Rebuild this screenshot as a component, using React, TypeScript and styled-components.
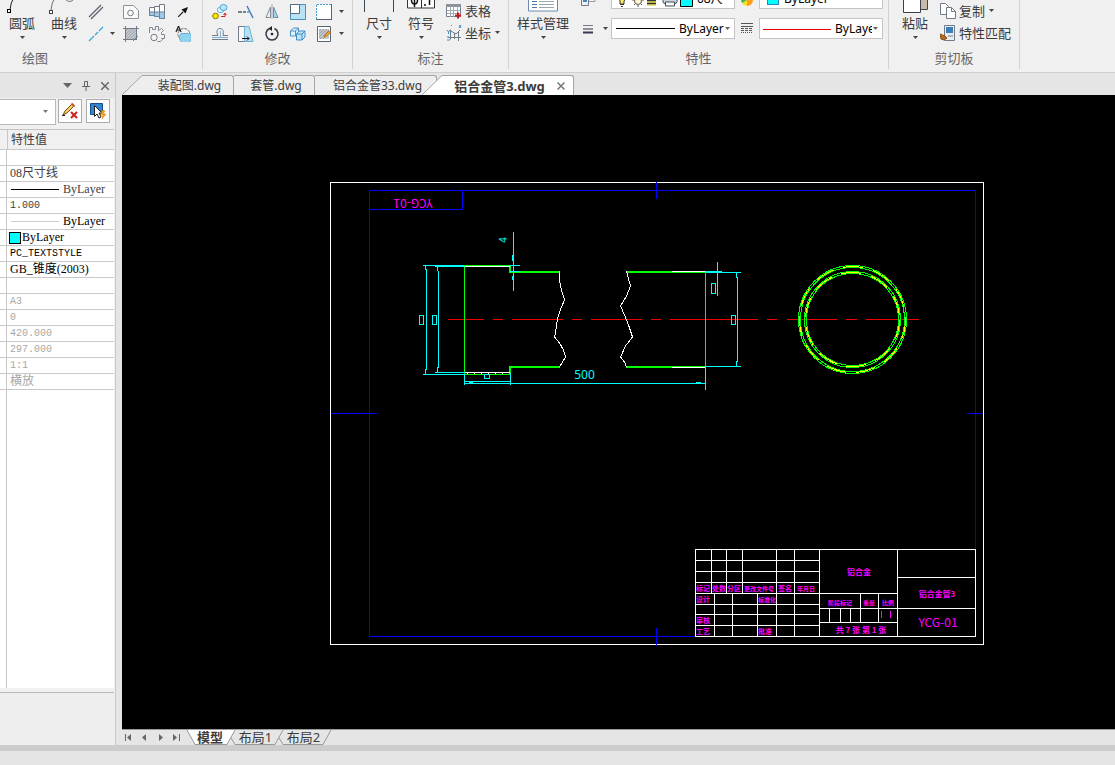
import React from 'react';
import styled, { createGlobalStyle, css } from 'styled-components';

const uiFont = '"Noto Sans", "Noto Sans CJK SC", sans-serif';

const GlobalStyle = createGlobalStyle`
  * { box-sizing: border-box; }
  body { margin: 0; background: #e5e5e5; font: 13px/18px ${uiFont}; color: #3c3c3c; }
  button, select, input { font: inherit; color: inherit; }
  button { border: 0; padding: 0; background: none; }
  svg { display: block; flex: none; }
`;

/* ---------- shell ---------- */

const Shell = styled.div`
  display: flex;
  flex-direction: column;
  min-height: 100vh;
`;

const Ribbon = styled.header`
  display: flex;
  height: 73px;
  overflow: hidden;
  background: #f0f0f0;
  border-bottom: 1px solid #d0d0d0;
`;

const Workspace = styled.div`
  display: flex;
  flex: 1;
`;

const StatusBar = styled.footer`
  height: 20px;
  border-top: 6px solid #cccccc;
  background: #e5e5e5;
`;

/* ---------- ribbon ---------- */

const Group = styled.section<{ $w: number }>`
  display: flex;
  flex-direction: column;
  flex: none;
  width: ${p => p.$w}px;
  height: 69px;
  border-right: 1px solid #d2d2d2;
`;

const GroupBody = styled.div<{ $pad: number }>`
  display: flex;
  height: 49px;
  padding-left: ${p => p.$pad}px;
`;

const GroupLabel = styled.div<{ $start?: boolean }>`
  color: #666;
  text-align: ${p => (p.$start ? 'left' : 'center')};
  padding-left: ${p => (p.$start ? 22 : 0)}px;
`;

const BigButton = styled.button<{ $w?: number }>`
  display: flex;
  flex-direction: column;
  align-items: center;
  flex: none;
  width: ${p => p.$w ?? 42}px;
`;

const BigText = styled.span`
  height: 22px;
  line-height: 18px;
  white-space: nowrap;
`;

const IconGrid = styled.div<{ $cols: string }>`
  display: grid;
  grid-template-columns: ${p => p.$cols};
  grid-auto-rows: 22px;
  padding-top: 1px;
`;

const IconButton = styled.button`
  display: flex;
  align-items: center;
  justify-content: center;
`;

const TextRows = styled.div`
  display: flex;
  flex-direction: column;
  padding-left: 4px;
`;

const TextButton = styled.button`
  display: flex;
  align-items: center;
  gap: 3px;
  height: 22px;
  white-space: nowrap;
`;

const PropertyGrid = styled.div`
  display: grid;
  grid-template-columns: 22px 12px 124px 24px 124px;
  grid-auto-rows: 21px;
  row-gap: 9px;
  margin-top: -12px;
`;

const Combo = styled.div`
  display: flex;
  align-items: center;
  border: 1px solid #c4c4c4;
  background: #fff;
  padding: 0 3px;
  font-size: 12px;
  color: #000;
`;

const ComboSelect = styled.select`
  appearance: none;
  flex: 1;
  min-width: 0;
  border: 0;
  padding: 0 0 0 4px;
  background: transparent;
  overflow: hidden;
`;

const Caret = ({ color = '#444' }: { color?: string }) => (
  <svg width="7" height="4" viewBox="0 0 7 4"><path d="M1 0h5L3.500 3z" fill={color} /></svg>
);

type IconProps = { children: React.ReactNode; w?: number; h?: number };
const Icon = ({ children, w = 16, h = 16 }: IconProps) => (
  <svg width={w} height={h} viewBox={`0 0 ${w} ${h}`} fill="none" stroke="#717b88" strokeWidth="1">
    {children}
  </svg>
);

const Hatch = () => (
  <>
    <rect x="2.5" y="2.5" width="11" height="11" fill="#c3c7cb" />
    <path d="M3 5l2-2M3 8l5-5M3 11l8-8M4 13l9-9M7 13l6-6M10 13l3-3" stroke="#969ca4" strokeWidth=".8" />
  </>
);

const drawTools: [string, React.ReactNode][] = [
  ['双线', <Icon><path d="M1 13L13 1M3 15L15 3" stroke="#5a626d" strokeWidth="1.300" /></Icon>],
  ['', <span />],
  ['孔', <Icon><path d="M.5 1.500h10l5 5v8H.5z" fill="#fafafa" stroke="#8b929b" /><circle cx="7.500" cy="9" r="2.800" /></Icon>],
  ['轴', <Icon><path d="M.5 3.500h5v8h-5z" fill="#fafafa" /><path d="M.5 8h5v3.500h-5z" fill="#a9c6e0" stroke="#6287a8" /><path d="M5.500 2.500h5v10h-5z" fill="#fafafa" /><path d="M5.500 8h5v4.500h-5z" fill="#a9c6e0" stroke="#6287a8" /><path d="M10.500 .5h5v14h-5z" fill="#fafafa" /><path d="M10.500 8h5v6.500h-5z" fill="#a9c6e0" stroke="#6287a8" /></Icon>],
  ['箭头', <Icon w={10} h={10}><path d="M0 10l5-5" stroke="#222" strokeWidth="1.200" /><path d="M10 0L7.500 6.500 3.500 2.500z" fill="#111" stroke="none" /></Icon>],
  ['构造线', <Icon><path d="M1 15L6 10M7 9l3-3M11 5l4-4" stroke="#35a7dc" strokeWidth="1.300" /></Icon>],
  ['更多线', <Caret />],
  ['填充', <Icon><Hatch /><path d="M2.500 0v16M13.500 0v12M0 2.500h16M0 13.500h12M10 15l5-5" /></Icon>],
  ['齿轮', <Icon><path d="M.5 7V1.500h3v2h3v-3h3v4l3-2 2 2-2 2v2h3v4h-3l1 1-2 2h-3" stroke="#7f8791" /><circle cx="5" cy="11.500" r="3.200" fill="#f4f4f4" /></Icon>],
  ['局部放大', <Icon><circle cx="9" cy="8.500" r="6" stroke="#6c7480" strokeDasharray="3 1" /><path d="M6 7.500h9a6 6 0 1 1-9 0z" fill="#8fd3ee" stroke="#6aaed0" /><path d="M1 6L3.500 0 6 6M2 4h3" stroke="#222" strokeWidth="1.200" /></Icon>],
];

const editTools: [string, React.ReactNode][] = [
  ['复制对象', <Icon><circle cx="3.500" cy="12" r="2.800" fill="#ffe600" stroke="#8c7a00" /><rect x="5.500" y="3.500" width="6" height="5" rx="2" fill="#e3f4fc" stroke="#56aee0" /><ellipse cx="11.500" cy="3.500" rx="3.500" ry="3" fill="#bfe5f8" stroke="#4ba3d8" /><path d="M9 12.500h4v-3M11.500 11l1.500-2 1.500 2" stroke="#c22" /></Icon>],
  ['延伸', <Icon><path d="M0 8h4M5 8h3" stroke="#4f5965" strokeWidth="1.500" /><path d="M9 8h2" stroke="#3ba4e0" strokeWidth="1.500" /><path d="M9 2l6 12" stroke="#3c77bd" strokeWidth="1.400" /></Icon>],
  ['镜像', <Icon w={14}><path d="M5.500 3v10.500H1z" fill="#eee" stroke="#838b95" /><path d="M8.500 3v10.500H13z" fill="#a9d4ea" stroke="#5c93b5" /><path d="M7 0v15" stroke="#aab" /></Icon>],
  ['缩放', <Icon><path d="M.5 .5h15v15H.5z" fill="#b9e2f5" stroke="#4b8fbf" /><path d="M.5 .5h9v9h-9z" fill="#fff" stroke="#5a6a7a" /></Icon>],
  ['选择', <Icon><rect x=".5" y=".5" width="15" height="15" fill="#fff" stroke="#58646f" /><path d="M.5 15V.5H15" stroke="#fff" /><path d="M.5 15V.5H15" stroke="#45a2d8" strokeDasharray="2 1" /></Icon>],
  ['更多选择', <Caret />],
  ['偏移', <Icon><path d="M0 9.500h6c-2-4-1-7 2-7s4 3 3 7h5M0 13.500h16" /><path d="M0 11.500h8.500V5M8.500 11.500H16" stroke="#7eb2d8" /></Icon>],
  ['拉伸', <Icon><path d="M.5 .5h9v15h-9z" fill="#f8f8f8" /><path d="M6.500 .5H11l4 15H6.500z" fill="#b9dff4" stroke="#6eb0d6" /><path d="M4 12.500h7M9 10.500l2 2-2 2" stroke="#111" /></Icon>],
  ['旋转', <Icon><path d="M10.500 2.500a6 6 0 1 1-5 0" stroke="#333b45" strokeWidth="1.500" /><path d="M8 0v5L4.500 2.500z" fill="#222" stroke="none" /><circle cx="8" cy="8" r="1.300" fill="#222" stroke="none" /></Icon>],
  ['阵列', <Icon><path d="M.5 5l3-3h5v5l-3 3h-5zM.5 5h5v5M5.500 5l3-3" fill="#dff1fa" stroke="#4b91c2" /><path d="M6.500 8l2.500-3h6v6l-3 3H6.500zM6.500 8H12v6M12 8l3-3" fill="#bde5f8" stroke="#4290c5" /></Icon>],
  ['填充编辑', <Icon><path d="M1.500 .5h13v15h-13z" fill="#fff" stroke="#5c6671" /><rect x="3" y="3" width="10" height="10" fill="#c6c9cc" stroke="none" /><path d="M3 5l2-2M3 8l5-5M3 11l8-8M4 13l9-9M7 13l6-6" stroke="#959ba2" /><path d="M9 9l4-4 2 1-4 4-3 1z" fill="#f5a326" stroke="#a76412" strokeWidth=".7" /></Icon>],
  ['更多编辑', <Caret />],
];

function ToolGrid({ cols, tools }: { cols: string; tools: [string, React.ReactNode][] }) {
  return (
    <IconGrid $cols={cols}>
      {tools.map(([name, icon], i) =>
        name ? <IconButton key={i} aria-label={name}>{icon}</IconButton> : <span key={i} />,
      )}
    </IconGrid>
  );
}

function Big({ icon, text, w }: { icon: React.ReactNode; text: string; w?: number }) {
  return (
    <BigButton $w={w}>
      <svg width="34" height="14" viewBox="0 0 34 14" fill="none" stroke="#3d4654">{icon}</svg>
      <BigText>{text}</BigText>
      <Caret />
    </BigButton>
  );
}

const LineWeightIcon = () => (
  <Icon w={12} h={10}><path d="M1 1.500h10" /><path d="M1 5h10" stroke="#333" /><path d="M1 8.500h10" stroke="#333b55" strokeWidth="2" /></Icon>
);

function RibbonBar() {
  return (
    <Ribbon>
      <Group $w={203}>
        <GroupBody $pad={1}>
          <Big text="圆弧" icon={<><path d="M5 10Q5 3 10 -4" stroke="#222" /><rect x="2.500" y="9.500" width="3" height="3" fill="#fff" stroke="#000" /></>} />
          <Big text="曲线" icon={<><path d="M4 10Q4 3 9 -4M18 -1q5 5 9 0" stroke="#6b7280" /><rect x="2.500" y="10.500" width="3" height="3" fill="#fff" stroke="#444" /></>} />
          <ToolGrid cols="22px 11px 26px 26px 26px" tools={drawTools} />
        </GroupBody>
        <GroupLabel $start>绘图</GroupLabel>
      </Group>

      <Group $w={150}>
        <GroupBody $pad={4}>
          <ToolGrid cols="26px 26px 26px 26px 26px 8px" tools={editTools} />
        </GroupBody>
        <GroupLabel>修改</GroupLabel>
      </Group>

      <Group $w={156}>
        <GroupBody $pad={5}>
          <Big text="尺寸" icon={<path d="M2.500 0v12M31.500 0v12" />} />
          <Big text="符号" icon={<><path d="M3.500 -4h27v12h-27zM17.500 0v8" fill="#fff" stroke="#333" /><path d="M10.500 0v7M7.500 0q0 4 3 4t3-4M21 6v-2M25.500 5V0" stroke="#111" strokeWidth="1.500" /></>} />
          <TextRows>
            <TextButton>
              <Icon>
                <path d="M.5 1.500h14v12H.5z" fill="#fff" /><path d="M0 2.500h15" stroke="#8a929c" strokeWidth="3" />
                <path d="M.5 7.500h14M.5 10.500h14M4.500 3v11M7.500 3v11M11.500 3v11" stroke="#a3a9b0" /><path d="M12 9.500v6M9 12.500h6" stroke="#c5161d" strokeWidth="2" />
              </Icon>
              表格
            </TextButton>
            <TextButton>
              <Icon>
                <path d="M4.500 4.500v10M2 12.500h13M5 6l5 3 4-4M12.500 6v10M8.500 8v6" /><path d="M1 5l1.500 2L4 5M2.500 7v2M5 0l1 1M13 0l2 3M15 0l-2 3M1 12h2M1 15h3" stroke="#3b8fd0" />
              </Icon>
              坐标
              <Caret />
            </TextButton>
          </TextRows>
        </GroupBody>
        <GroupLabel>标注</GroupLabel>
      </Group>

      <Group $w={380}>
        <GroupBody $pad={0}>
          <Big w={68} text="样式管理" icon={<><path d="M2.500 -4h29v15h-29z" fill="#fff" stroke="#6b8dad" /><path d="M6 1.500h5M6 4.500h5M6 7.500h5" stroke="#4f7da8" /><path d="M13 1.500h15M13 4.500h15M13 7.500h15" stroke="#9aa6b2" /></>} />
          <PropertyGrid>
            <IconButton aria-label="图层"><Icon><path d="M1.500 1.500h7v13h-7z" /><path d="M3 6h4v5H3z" fill="#4b82bd" stroke="none" /><path d="M9 5.500h6v5H9" stroke="#99a" /></Icon></IconButton>
            <span />
            <Combo>
              <svg width="78" height="19" viewBox="0 0 78 19">
                <path d="M3 5a4 4 0 0 1 6 7v3H5v-3z" fill="#ffe96b" stroke="#333" /><path d="M5 15.500h4M6 17.500h2" stroke="#333" />
                <circle cx="23" cy="12" r="3.500" fill="#fff6d0" stroke="#555" /><path d="M17 11h2M27 11h2M19 16l1-1M27 16l-1-1M23 16v2" stroke="#555" />
                <path d="M32 11.500h9M32 14.500h9" stroke="#333" strokeWidth="2" /><path d="M32 13h9M32 16h9" stroke="#d8d000" />
                <rect x="48" y="8.500" width="14" height="6" rx="2" fill="#ccd4dd" stroke="#444b55" /><path d="M50.500 13h9v4h-9z" fill="#fff" stroke="#444b55" />
                <path d="M65.500 4.500h12v13h-12z" fill="#00ffff" stroke="#000" />
              </svg>
              <ComboSelect aria-label="当前图层"><option>08尺寸线</option></ComboSelect>
              <Caret color="#666" />
            </Combo>
            <IconButton aria-label="颜色">
              <Icon w={14} h={16}><g stroke="none"><path d="M7 9V3a6 6 0 0 1 6 6z" fill="#e94b35" /><path d="M7 9h6a6 6 0 0 1-6 6z" fill="#ff9d18" /><path d="M7 9v6a6 6 0 0 1-5-3z" fill="#ffdf1b" /><path d="M7 9L2 12a6 6 0 0 1 5-9z" fill="#44b34a" /></g></Icon>
            </IconButton>
            <Combo>
              <svg width="17" height="19"><rect x="4.500" y="3.500" width="11" height="12" fill="#00ffff" stroke="#2685c9" /></svg>
              <ComboSelect aria-label="对象颜色"><option>ByLayer</option></ComboSelect>
              <Caret color="#666" />
            </Combo>
            <IconButton aria-label="线宽设置"><LineWeightIcon /></IconButton>
            <IconButton aria-label="更多线宽"><Caret /></IconButton>
            <Combo>
              <svg width="60" height="19"><path d="M1 9.500h59" stroke="#000" /></svg>
              <ComboSelect aria-label="线宽"><option>ByLayer</option></ComboSelect>
              <Caret color="#666" />
            </Combo>
            <IconButton aria-label="线型设置"><Icon w={12} h={11}><path d="M0 .5h12M0 3.500h12" stroke="#555" /><path d="M0 5.500h12M0 7.500h12" stroke="#555" strokeDasharray="3 1" /><path d="M0 9.500h12" stroke="#555" strokeDasharray="1 1" /></Icon></IconButton>
            <Combo>
              <svg width="68" height="19"><path d="M0 10.500h68" stroke="#f00000" /></svg>
              <ComboSelect aria-label="线型"><option>ByLayer</option></ComboSelect>
              <Caret color="#666" />
            </Combo>
          </PropertyGrid>
        </GroupBody>
        <GroupLabel>特性</GroupLabel>
      </Group>

      <Group $w={131}>
        <GroupBody $pad={5}>
          <Big text="粘贴" icon={<><path d="M22 -2h7.500v11.500H22z" fill="#c8bba8" stroke="#4a4440" /><path d="M5.500 -2h17v14.500h-17z" fill="#fff" stroke="#3b4150" /></>} />
          <TextRows>
            <TextButton>
              <Icon><path d="M.5 .5h5l3 3v8h-8z" fill="#fff" /><path d="M6.500 4.500h5l4 4v7h-9z" fill="#fff" /><path d="M11.500 4.500v4h4" /></Icon>
              复制
              <Caret />
            </TextButton>
            <TextButton>
              <Icon><path d="M4.500 .5h10v15h-10z" fill="#e9edf1" /><path d="M6 2h7v6H6z" fill="#3c7db8" stroke="none" /><path d="M8 11h5" /><path d="M0 9l5 2 2 2-3 2-3-1z" fill="#b56a1d" stroke="#8b5014" /></Icon>
              特性匹配
            </TextButton>
          </TextRows>
        </GroupBody>
        <GroupLabel>剪切板</GroupLabel>
      </Group>
    </Ribbon>
  );
}

/* ---------- property panel ---------- */

const Panel = styled.aside`
  display: flex;
  flex-direction: column;
  flex: none;
  width: 116px;
  background: #f0f0f0;
  border-right: 1px solid #c8c8c8;
`;

const PanelTitle = styled.div`
  display: flex;
  align-items: center;
  justify-content: flex-end;
  gap: 7px;
  height: 25px;
  padding-right: 4px;
  background: #e5e5e5;
`;

const PanelButton = styled.button`
  display: flex;
  align-items: center;
  justify-content: center;
  width: 12px;
  height: 12px;
`;

const PanelTools = styled.div`
  display: flex;
  align-items: flex-start;
  gap: 4px;
  height: 31px;
  padding-top: 1px;
`;

const ObjectCombo = styled.div`
  display: flex;
  align-items: center;
  width: 56px;
  height: 26px;
  padding-right: 6px;
  border: solid #b9b9b9;
  border-width: 1px 1px 1px 0;
  background: #fff;
  margin-right: -2px;
`;

const ToolBox = styled.button`
  display: flex;
  align-items: center;
  justify-content: center;
  width: 24px;
  height: 24px;
  border: 1px solid #adadad;
  background: #fdfdfd;
`;

const TableFrame = styled.div`
  flex: 1;
  margin-right: 1px;
  border-top: 1px solid #c4c4c4;
  background: linear-gradient(#c8c8c8, #c8c8c8) 6px 0 / 1px 100% no-repeat #fff;
`;

const PropTable = styled.table`
  width: 100%;
  border-collapse: separate;
  border-spacing: 0;
  table-layout: fixed;
  font: 12px/15px "Liberation Serif", "Noto Sans CJK SC", serif;
`;

const HeadCell = styled.th<{ $key?: boolean }>`
  width: ${p => (p.$key ? '7px' : 'auto')};
  height: 20px;
  padding: 1px 0 0 ${p => (p.$key ? 0 : 3)}px;
  border: solid #c8c8c8;
  border-width: 0 0 1px ${p => (p.$key ? 0 : 1)}px;
  background: #f0f0f0;
  font-weight: 400;
  text-align: left;
`;

const Cell = styled.td<{ $tone?: string }>`
  height: 16px;
  padding: 0 0 0 3px;
  border-bottom: 1px solid #c8c8c8;
  color: ${p => (p.$tone === 'dim' ? '#a8a8a8' : p.$tone === 'strong' ? '#000' : '#404040')};
  white-space: nowrap;
`;

const CellValue = styled.div<{ $mono?: boolean }>`
  display: flex;
  align-items: center;
  gap: 4px;
  height: 15px;
  ${p => p.$mono && css`font: 10px/15px "Liberation Mono", monospace;`}
`;

const Swatch = styled.span`
  width: 12px;
  height: 12px;
  margin: 0 -3px 0 -1px;
  border: 1px solid #000;
  background: #00ffff;
`;

const PanelHint = styled.div`
  height: 52px;
  margin: 4px 1px 1px 0;
  border-top: 1px solid #b9b9b9;
  background: #eeeeee;
`;

const rows: { tone?: string; mono?: boolean; value: React.ReactNode }[] = [
  { value: '' },
  { value: '08尺寸线' },
  { value: <><svg width="49" height="3"><path d="M1 1.500h48" stroke="#000" /></svg>ByLayer</> },
  { mono: true, value: '1.000' },
  { tone: 'strong', value: <><svg width="49" height="3"><path d="M1 1.500h48" stroke="#ccc" /></svg>ByLayer</> },
  { tone: 'strong', value: <><Swatch />ByLayer</> },
  { tone: 'strong', mono: true, value: 'PC_TEXTSTYLE' },
  { tone: 'strong', value: 'GB_锥度(2003)' },
  { value: '' },
  { tone: 'dim', mono: true, value: 'A3' },
  { tone: 'dim', mono: true, value: '0' },
  { tone: 'dim', mono: true, value: '420.000' },
  { tone: 'dim', mono: true, value: '297.000' },
  { tone: 'dim', mono: true, value: '1:1' },
  { tone: 'dim', value: '横放' },
];

function PropertyPanel() {
  return (
    <Panel>
      <PanelTitle>
        <PanelButton aria-label="菜单"><svg width="9" height="5"><path d="M0 0h9L4.500 5z" fill="#666" /></svg></PanelButton>
        <PanelButton aria-label="固定"><svg width="8" height="10" fill="none" stroke="#666"><path d="M2.500 5.500v-5h3v5M5.500 .5v5M0 5.500h8M4 6v4" /></svg></PanelButton>
        <PanelButton aria-label="关闭"><svg width="8" height="8" stroke="#666" strokeWidth="1.500"><path d="M0 0l8 8M8 0l-8 8" /></svg></PanelButton>
      </PanelTitle>
      <PanelTools>
        <ObjectCombo>
          <ComboSelect aria-label="对象类型"><option> </option></ComboSelect>
          <Caret color="#777" />
        </ObjectCombo>
        <ToolBox aria-label="清除选择">
          <svg width="18" height="18" viewBox="0 0 18 18"><path d="M2 13l2-4 7-7 2 2-7 7z" fill="#f6cf58" stroke="#6e4a20" /><path d="M10.500 1.500l3 3" stroke="#c7502a" strokeWidth="2" /><path d="M1 13.500h3" stroke="#222" /><path d="M10 10l6 6M16 10l-6 6" stroke="#d01d1d" strokeWidth="2" /></svg>
        </ToolBox>
        <ToolBox aria-label="快速选择">
          <svg width="18" height="18" viewBox="0 0 18 18"><path d="M1.500 1.500h12v11h-12z" fill="#3286d1" stroke="#164f8e" /><path d="M5.500 3.500v11l2.500-2.500 2 4 2-1-2-4h3z" fill="#fff" stroke="#222" /><path d="M14 8l-3 5h3l-1 4 4-5h-3l2-3z" fill="#f6a51f" stroke="#d07a00" strokeWidth=".5" /></svg>
        </ToolBox>
      </PanelTools>
      <TableFrame>
        <PropTable>
          <thead><tr><HeadCell $key aria-label="特性名" /><HeadCell>特性值</HeadCell></tr></thead>
          <tbody>
            {rows.map((r, i) => (
              <tr key={i}>
                <Cell />
                <Cell $tone={r.tone}><CellValue $mono={r.mono}>{r.value}</CellValue></Cell>
              </tr>
            ))}
          </tbody>
        </PropTable>
      </TableFrame>
      <PanelHint />
    </Panel>
  );
}

/* ---------- document tabs ---------- */

const Document = styled.main`
  display: flex;
  flex-direction: column;
  flex: 1;
  min-width: 0;
  margin-left: 6px;
`;

const FileTabs = styled.nav`
  display: flex;
  align-items: flex-end;
  height: 22px;
  background: #e5e5e5;
`;

const FileTab = styled.button<{ $active?: boolean }>`
  display: flex;
  height: 20px;
  position: relative;
  font-size: 12px;
  ${p => p.$active && css`margin-left: -15px; font-size: 13px; font-weight: 700;`}
`;

const TabFace = styled.span<{ $w: number; $active?: boolean }>`
  display: flex;
  align-items: center;
  justify-content: center;
  gap: 12px;
  width: ${p => p.$w}px;
  height: 20px;
  padding-left: 4px;
  border: solid #a5a5a5;
  border-width: 1px 1px 0 0;
  border-radius: 0 3px 0 0;
  background: ${p => (p.$active ? '#fff' : '#eeeeee')};
  white-space: nowrap;
`;

const Slope = ({ fill }: { fill: string }) => (
  <svg width="20" height="20"><path d="M0 20L20 .5V20z" fill={fill} /><path d="M0 20L20 .5" stroke="#a5a5a5" fill="none" /></svg>
);

const Canvas = styled.div`
  flex: 1;
  background: #000;
  overflow: hidden;
`;

const LayoutBar = styled.nav`
  display: flex;
  height: 16px;
  border-top: 1px solid #999;
  background: #e5e5e5;
`;

const NavButtons = styled.div`
  display: flex;
  align-items: center;
  width: 64px;
  margin-right: 1px;
`;

const NavButton = styled.button`
  display: flex;
  justify-content: center;
  width: 16px;
  padding-right: 4px;
`;

const LayoutTab = styled.button<{ $active?: boolean }>`
  position: relative;
  display: flex;
  align-items: center;
  justify-content: center;
  width: 48px;
  height: 15px;
  line-height: 14px;
  padding: 0 ${p => (p.$active ? 2 : 7)}px 2px 0;
  font-weight: ${p => (p.$active ? 700 : 400)};
  z-index: ${p => (p.$active ? 1 : 0)};
`;

const TabShape = styled.svg`
  position: absolute;
  inset: 0;
  z-index: -1;
  overflow: visible;
`;

/* ---------- drawing ---------- */

const titleTexts: [number, number, number, string][] = [
  [703, 591, 7, '标记'], [719, 591, 7, '处数'], [734, 591, 7, '分区'], [759, 591, 6, '更改文件号'],
  [785, 591, 7, '签名'], [806, 591, 6, '年月日'], [703, 602, 7, '设计'], [767, 602, 6, '标准化'],
  [703, 623, 7, '审核'], [703, 634, 7, '工艺'], [765, 634, 7, '批准'],
  [840, 605, 6, '阶段标记'], [869, 605, 6, '重量'], [888, 605, 6, '比例'],
  [861, 633, 8, '共 7 张 第 1 张'], [859, 575, 8, '铝合金'], [937, 597, 8, '铝合金管3'],
];

const titleGrid =
  'M695.500 549.500H975.500V636.500H695.500Z' +
  'M695 560.500H819M695 571.500H819M695 582.500H819M695 593.500H897M695 604.500H819M695 614.500H819M695 625.500H819' +
  'M711.500 549V593M726.500 549V593M742.500 549V593M776.500 549V636M794.500 549V636M819.500 549V636' +
  'M714.500 593V636M732.500 593V636M757.500 593V636' +
  'M897.500 549V636M819 608.500H975M819 622.500H897M897 577.500H975' +
  'M860.500 593V622M878.500 593V622M829.500 608V622M840.500 608V622M850.500 608V622';

const dimensionLines =
  'M423 265.500H464M510 265.500H520M435 266.500H465M510 271.500H520M513.500 232V291M512.500 255V261M512.500 276V280' +
  'M426.500 269V370M425.500 265V270M425.500 369V374M438.500 271V368M437.500 266V271M437.500 367V372' +
  'M435 372.500H465M423 374.500H464M464.500 374V385M510.500 373V385M464 381.500H510M464 383.500H705M469 382.500H473' +
  'M419.500 315.500h4v9h-4zM432.500 315.500h4v9h-4zM484.500 374.500h5v4h-5z' +
  'M705 271.500H722M705 272.500H741M717.500 262V296M711.500 283.500h4v10h-4zM737.500 277V362M736.500 272V278M736.500 361V366' +
  'M705 366.500H741M731.500 315.500h4v9h-4zM705.500 367V390M696 382.500H701';

function Drawing() {
  return (
    <svg width="100%" height="100%" fill="none" shapeRendering="crispEdges" role="img" aria-label="铝合金管3">
      <g transform="translate(-122 -95)">
        <path d="M330.500 182.500H983.500V644.500H330.500Z" stroke="#fff" />
        <path d="M369.500 190.500H975.500V636.500H369.500ZM369 209.500H463M462.500 190V210M656.500 182V199M656.500 628V646M331 413.500H377M967 413.500H983" stroke="#0000ff" />
        <path d="M448 319.500H484M493 319.500H503M512 319.500H563M572 319.500H582M591 319.500H642M651 319.500H661M670 319.500H758M767 319.500H777M787 319.500H837M846 319.500H857M866 319.500H919" stroke="#f00000" />

        <path d="M464.500 265V375M464 265.500H510M464 374.500H510M705.500 271V367" stroke="#00ff00" />
        <path d="M510 265V272H560M510 374V367H560M626 272H705M626 367H705" stroke="#00ff00" strokeWidth="2" />
        <path d="M465 266.500H510M465 372.500H510M672 271.500H705M672 367.500H705" stroke="#fff" />
        <path d="M467 373.500H505" stroke="#ffffa0" strokeDasharray="1 6" />
        <path d="M559.500 271V280L561.500 290 564.500 300 559.500 312 557.500 319 555.500 333 554.500 337 559.500 343 563.500 350 565.500 357 562.500 362 559.500 367M626.500 271L628.500 279 630.500 286 626.500 296 620.500 306 624.500 315 628.500 325 632.500 337 625.500 346 620.500 357 624.500 362 626.500 367" stroke="#fff" />
        <path d={dimensionLines} stroke="#00ffff" />

        <g stroke="#00ff00">
          <circle cx="852.500" cy="319.500" r="54" /><circle cx="852.500" cy="319.500" r="52" />
          <circle cx="852.500" cy="319.500" r="48" /><circle cx="852.500" cy="319.500" r="46" />
        </g>
        <g stroke="#ffff00" strokeDasharray="20 10">
          <circle cx="852.500" cy="319.500" r="53" /><circle cx="852.500" cy="319.500" r="47" />
        </g>

        <g textAnchor="middle" fill="#00ffff">
          <text x="584.500" y="379" fontSize="12" fontFamily='"Noto Sans", sans-serif'>500</text>
          <text transform="translate(507 240) rotate(-90)" fontSize="10" fontFamily='"Liberation Sans", sans-serif'>4</text>
        </g>

        <path d={titleGrid} fill="#000" fillOpacity="0" stroke="#fff" />
        <path d="M881.500 611V618M890.500 611V618" stroke="#ff00ff" />
        <g fill="#ff00ff" textAnchor="middle" fontFamily='"Noto Sans CJK SC", sans-serif'>
          {titleTexts.map(([x, y, size, t], i) => <text key={i} x={x} y={y} fontSize={size} fontWeight="700">{t}</text>)}
          <text x="938" y="627" fontSize="12">YCG-01</text>
          <text transform="translate(413 199) rotate(180)" fontSize="12">YCG-01</text>
        </g>
      </g>
    </svg>
  );
}

function DocumentArea() {
  return (
    <Document>
      <FileTabs>
        <FileTab><Slope fill="#eeeeee" /><TabFace $w={92}>装配图.dwg</TabFace></FileTab>
        <FileTab><TabFace $w={81}>套管.dwg</TabFace></FileTab>
        <FileTab><TabFace $w={122}>铝合金管33.dwg</TabFace></FileTab>
        <FileTab $active>
          <Slope fill="#fff" />
          <TabFace $w={132} $active>
            铝合金管3.dwg
            <svg width="8" height="8" stroke="#777" strokeWidth="1.500"><path d="M.5 .5l7 7M7.500 .5l-7 7" /></svg>
          </TabFace>
        </FileTab>
      </FileTabs>
      <Canvas><Drawing /></Canvas>
      <LayoutBar>
        <NavButtons>
          <NavButton aria-label="第一个"><svg width="7" height="7"><path d="M.5 0v7" stroke="#666" /><path d="M6 0v7L2 3.500z" fill="#666" /></svg></NavButton>
          <NavButton aria-label="上一个"><svg width="5" height="7"><path d="M4 0v7L0 3.500z" fill="#666" /></svg></NavButton>
          <NavButton aria-label="下一个"><svg width="5" height="7"><path d="M1 0v7l4-3.500z" fill="#666" /></svg></NavButton>
          <NavButton aria-label="最后一个"><svg width="8" height="7"><path d="M7.500 0v7" stroke="#666" /><path d="M1 0v7l4-3.500z" fill="#666" /></svg></NavButton>
        </NavButtons>
        <LayoutTab $active>
          <TabShape width="48" height="15"><path d="M0 0L8 14.500H40L48 0" fill="#fff" stroke="#999" /></TabShape>
          模型
        </LayoutTab>
        <LayoutTab>
          <TabShape width="48" height="15" fill="none" stroke="#999"><path d="M-4 8L0 14.500H40L48 0" /></TabShape>
          布局1
        </LayoutTab>
        <LayoutTab>
          <TabShape width="48" height="15" fill="none" stroke="#999"><path d="M-4 8L0 14.500H40L48 0" /></TabShape>
          布局2
        </LayoutTab>
      </LayoutBar>
    </Document>
  );
}

export default function App() {
  return (
    <>
      <GlobalStyle />
      <Shell>
        <RibbonBar />
        <Workspace>
          <PropertyPanel />
          <DocumentArea />
        </Workspace>
        <StatusBar />
      </Shell>
    </>
  );
}
